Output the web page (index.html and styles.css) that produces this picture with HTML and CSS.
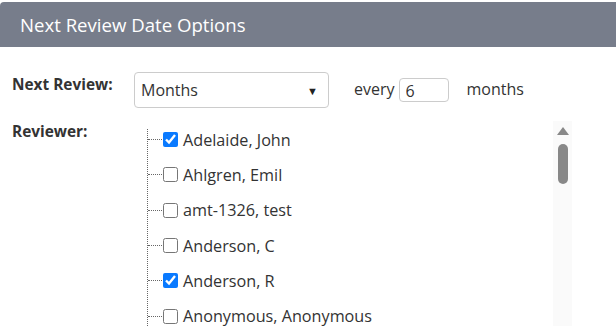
FILE: index.html
```html
<!doctype html>
<html lang="en">
  <head>
    <meta charset="UTF-8" />
    <title>Next Review Date Options</title>
    <link rel="stylesheet" href="styles.css">
  </head>
  <body>
    <div class="panel">
      <div class="panel-header">Next Review Date Options</div>
      <div class="panel-body">
        <div class="row row-review">
          <label class="field-label">Next Review:</label>
          <div class="select">
            <span>Months</span>
            <span class="caret">&#9660;</span>
          </div>
          <span class="every">every</span>
          <input class="num" type="text" value="6" />
          <span class="unit">months</span>
        </div>
        <div class="row row-reviewer">
          <label class="field-label">Reviewer:</label>
          <div class="tree-wrap">
            <ul class="tree">
              <li><input type="checkbox" checked /><span>Adelaide, John</span></li>
              <li><input type="checkbox" /><span>Ahlgren, Emil</span></li>
              <li><input type="checkbox" /><span>amt-1326, test</span></li>
              <li><input type="checkbox" /><span>Anderson, C</span></li>
              <li><input type="checkbox" checked /><span>Anderson, R</span></li>
              <li><input type="checkbox" /><span>Anonymous, Anonymous</span></li>
            </ul>
            <div class="scrollbar">
              <span class="arrow"></span>
              <span class="thumb"></span>
            </div>
          </div>
        </div>
      </div>
    </div>
  </body>
</html>
```

FILE: styles.css
```css
body {
  margin: 0;
  font-family: "Open Sans", Arial, sans-serif;
  color: #333;
  background: #fff;
  overflow: hidden;
  height: 327px;
}
.panel {
  padding-top: 2px;
}
.panel-header {
  background-color: #777d8b;
  color: #fff;
  font-size: 18.6px;
  height: 45px;
  line-height: 45px;
  padding-left: 20px;
  border-radius: 4px 0 0 0;
}
.panel-body {
  padding: 25px 0 0 12px;
}
.row {
  display: flex;
}
.row-review {
  align-items: center;
  height: 36px;
}
.field-label {
  font-weight: bold;
  font-size: 15.4px;
  width: 122px;
}
.row-review .field-label {
  margin-top: -12px;
}
.select {
  box-sizing: border-box;
  width: 195px;
  height: 36px;
  border: 1px solid #ccc;
  border-radius: 4px;
  display: flex;
  align-items: center;
  justify-content: space-between;
  padding: 0 10px 0 6px;
  font-size: 16px;
}
.caret {
  font-size: 11px;
  color: #222;
}
.every {
  margin-left: 25px;
  font-size: 16px;
  margin-top: -2px;
}
.num {
  box-sizing: border-box;
  width: 50px;
  height: 24px;
  margin: 0 0 0 4px;
  border: 1px solid #ccc;
  border-radius: 4px;
  padding: 2px 6px 0;
  font-family: inherit;
  font-size: 16px;
  color: #333;
}
.unit {
  margin-left: 18px;
  font-size: 16px;
  margin-top: -2px;
}
.row-reviewer {
  margin-top: 13px;
}
.tree-wrap {
  display: flex;
  margin-left: 13px;
}
.tree {
  list-style: none;
  margin: 8px 0 0;
  padding: 0;
  width: 405px;
  border-left: 1px dotted #666;
  height: 197px;
}
.tree li {
  display: flex;
  align-items: center;
  height: 35.3px;
  font-size: 16.2px;
}
.tree li:first-child {
  margin-top: -7px;
}
.tree li::before {
  content: "";
  width: 14px;
  border-top: 1px dotted #666;
}
.tree input {
  margin: 0 5px 0 1px;
  width: 15px;
  height: 15px;
  accent-color: #0a7aff;
}
.scrollbar {
  width: 19px;
  background: #fafafa;
  height: 205px;
  display: flex;
  flex-direction: column;
  align-items: center;
}
.arrow {
  margin-top: 6px;
  width: 0;
  height: 0;
  border-left: 6px solid transparent;
  border-right: 6px solid transparent;
  border-bottom: 8px solid #888;
}
.thumb {
  margin-top: 9px;
  width: 10px;
  height: 40px;
  border-radius: 5px;
  background: #888;
}
```
